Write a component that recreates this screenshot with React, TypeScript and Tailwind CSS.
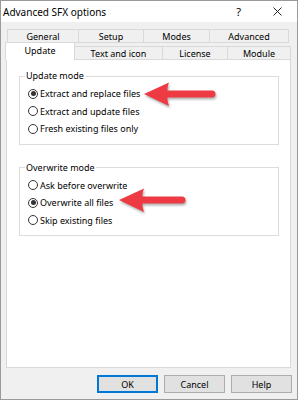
import React from "react";

const font = { fontFamily: '"Noto Sans", "Open Sans", sans-serif' };

const row1 = [
  { label: "General", w: "w-[72px] border-l" },
  { label: "Setup", w: "w-[65px]" },
  { label: "Modes", w: "w-[66px]" },
  { label: "Advanced", w: "w-[79px]" },
];

const row2 = [
  { label: "Text and icon", w: "w-[88px]" },
  { label: "License", w: "w-[65px]" },
  { label: "Module", w: "w-[63px]" },
];

function Radio({ label, checked }: { label: string; checked?: boolean }) {
  return (
    <div className="flex h-[17.5px] items-center">
      <span className="flex h-[10px] w-[10px] items-center justify-center rounded-full border border-[#333] bg-white">
        {checked && <span className="h-[5px] w-[5px] rounded-full bg-[#333]" />}
      </span>
      <span className="ml-[2px] text-[9px] leading-none text-black">{label}</span>
    </div>
  );
}

function Group({ title, items, checked, className }: { title: string; items: string[]; checked: number; className: string }) {
  return (
    <fieldset className={`w-[260px] border border-[#dcdcdc] pl-[5px] pb-[6px] ${className}`}>
      <legend className="px-[1px] text-[9px] leading-[12px] text-black">{title}</legend>
      <div className="ml-[3px] mt-[3px] flex flex-col">
        {items.map((it, i) => (
          <Radio key={it} label={it} checked={i === checked} />
        ))}
      </div>
    </fieldset>
  );
}

function Arrow({ className, len }: { className: string; len: number }) {
  return (
    <svg
      className={`absolute drop-shadow-[1px_2px_1px_rgba(0,0,0,0.3)] ${className}`}
      width={len + 8}
      height={30}
      viewBox={`0 0 ${len + 8} 30`}
    >
      <path
        d={`M2 14 L27 2.5 Q25 8 25.5 10.5 L${len} 10.5 A3.5 3.5 0 0 1 ${len} 17.5 L25.5 17.5 Q25 20 27 26 Z`}
        fill="#ee3a42"
      />
    </svg>
  );
}

export default function App() {
  return (
    <div className="relative h-[400px] w-[298px] overflow-hidden border border-[#9a9a9a] bg-[#f0f0f0] text-black" style={font}>
      {/* title bar */}
      <div className="flex h-[21px] items-center bg-white pl-[2px]">
        <span className="text-[10px] leading-none">Advanced SFX options</span>
        <span className="ml-auto mr-[32px] text-[11px] leading-none">?</span>
        <svg width="9" height="9" viewBox="0 0 9 9" className="mr-[15px]">
          <path d="M0.5 0.5 L8.5 8.5 M8.5 0.5 L0.5 8.5" stroke="#111" strokeWidth="0.9" />
        </svg>
      </div>

      {/* tabs */}
      <div className="mt-[7px] ml-[6px] flex h-[14px]">
        {row1.map((t) => (
          <div
            key={t.label}
            className={`flex h-[14px] items-center justify-center border-y border-r border-[#d9d9d9] text-[9px] leading-none ${t.w}`}
          >
            {t.label}
          </div>
        ))}
      </div>
      <div className="ml-[4px] flex h-[16px] items-end">
        <div className="relative z-10 -mb-px flex h-[18px] w-[70px] items-center justify-center border-x border-t border-[#d9d9d9] bg-white pb-[2px] text-[9px] leading-none">
          Update
        </div>
        {row2.map((t) => (
          <div
            key={t.label}
            className={`flex h-[13px] items-center justify-center border-t border-r border-[#d9d9d9] text-[9px] leading-none ${t.w}`}
          >
            {t.label}
          </div>
        ))}
      </div>

      {/* panel */}
      <div className="ml-[5px] h-[309px] w-[285px] border border-[#d9d9d9] bg-white pl-[12px] pt-[10px]">
        <Group
          title="Update mode"
          items={["Extract and replace files", "Extract and update files", "Fresh existing files only"]}
          checked={0}
          className=""
        />
        <Group
          title="Overwrite mode"
          items={["Ask before overwrite", "Overwrite all files", "Skip existing files"]}
          checked={1}
          className="mt-[17px]"
        />
      </div>

      {/* buttons */}
      <div className="mt-[7px] flex justify-end gap-[6px] pr-[5px]">
        <button className="h-[18px] w-[61px] border-2 border-[#0078d7] bg-[#e1e1e1] text-[9px] leading-none">OK</button>
        <button className="h-[18px] w-[61px] border border-[#adadad] bg-[#e1e1e1] text-[9px] leading-none">Cancel</button>
        <button className="h-[18px] w-[61px] border border-[#adadad] bg-[#e1e1e1] text-[9px] leading-none">Help</button>
      </div>

      <Arrow className="left-[141px] top-[79px]" len={70} />
      <Arrow className="left-[116px] top-[185px]" len={65} />
    </div>
  );
}
